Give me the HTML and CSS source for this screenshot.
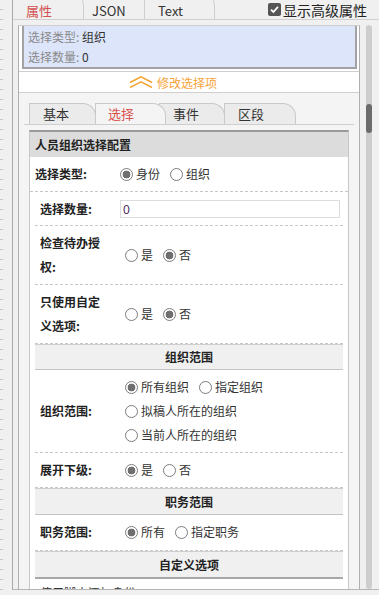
FILE: index.html
```html
<!DOCTYPE html>
<html lang="zh-CN">
<head>
<meta charset="utf-8">
<title>属性</title>
<link rel="stylesheet" href="styles.css">
</head>
<body>
<div class="app">
  <div class="ruler"></div>
  <div class="panel">
    <div class="topbar">
      <div class="tabs">
        <div class="tab t1 active">属性</div>
        <div class="tab t2">JSON</div>
        <div class="tab t3">Text</div>
      </div>
      <label class="adv"><span class="cbox"><svg width="11" height="11" viewBox="0 0 11 11"><path d="M2 5.6 L4.4 8 L9 2.8" fill="none" stroke="#fff" stroke-width="1.8"/></svg></span>显示高级属性</label>
    </div>
    <div class="viewport">
      <div class="content">
        <div class="summary-wrap">
          <div class="summary">
            <div><span class="k">选择类型:</span> 组织</div>
            <div><span class="k">选择数量:</span> 0</div>
          </div>
        </div>
        <div class="modify">
          <svg class="chev" width="24" height="12" viewBox="0 0 24 12"><path d="M1 6.5 L12 0.8 L23 6.5 M1 11.5 L12 5.8 L23 11.5" fill="none" stroke="#f6a534" stroke-width="1.6"/></svg>
          <span>修改选择项</span>
        </div>
        <div class="subarea">
          <div class="subtabs">
            <div class="stab s1">基本</div>
            <div class="stab s2 active">选择</div>
            <div class="stab s3">事件</div>
            <div class="stab s4">区段</div>
          </div>
          <div class="form">
            <div class="fhead">人员组织选择配置</div>
            <div class="row">
              <div class="lbl">选择类型:</div>
              <div class="val">
                <label class="opt"><input type="radio" name="type" checked>身份</label>
                <label class="opt"><input type="radio" name="type">组织</label>
              </div>
            </div>
            <div class="inner">
              <div class="row r33">
                <div class="lbl">选择数量:</div>
                <div class="val"><input class="num" type="text" value="0"></div>
              </div>
              <div class="row">
                <div class="lbl">检查待办授权:</div>
                <div class="val">
                  <label class="opt"><input type="radio" name="auth">是</label>
                  <label class="opt"><input type="radio" name="auth" checked>否</label>
                </div>
              </div>
              <div class="row">
                <div class="lbl">只使用自定义选项:</div>
                <div class="val">
                  <label class="opt"><input type="radio" name="custom">是</label>
                  <label class="opt"><input type="radio" name="custom" checked>否</label>
                </div>
              </div>
              <div class="sec">组织范围</div>
              <div class="row">
                <div class="lbl">组织范围:</div>
                <div class="val stack">
                  <div class="line">
                    <label class="opt"><input type="radio" name="org" checked>所有组织</label>
                    <label class="opt"><input type="radio" name="org">指定组织</label>
                  </div>
                  <div class="line"><label class="opt"><input type="radio" name="org">拟稿人所在的组织</label></div>
                  <div class="line"><label class="opt"><input type="radio" name="org">当前人所在的组织</label></div>
                </div>
              </div>
              <div class="row">
                <div class="lbl">展开下级:</div>
                <div class="val">
                  <label class="opt"><input type="radio" name="expand" checked>是</label>
                  <label class="opt"><input type="radio" name="expand">否</label>
                </div>
              </div>
              <div class="sec s25">职务范围</div>
              <div class="row r35">
                <div class="lbl">职务范围:</div>
                <div class="val">
                  <label class="opt"><input type="radio" name="duty" checked>所有</label>
                  <label class="opt"><input type="radio" name="duty">指定职务</label>
                </div>
              </div>
              <div class="sec s25 last">自定义选项</div>
              <div class="row">
                <div class="full">使用脚本添加身份</div>
              </div>
            </div>
          </div>
        </div>
      </div>
      <div class="scrollbar"><div class="thumb"></div></div>
    </div>
  </div>
</div>
</body>
</html>
```
FILE: styles.css
```css
* { box-sizing: border-box; }
html, body { margin: 0; padding: 0; }
body {
  width: 379px;
  height: 595px;
  overflow: hidden;
  background: #f0f0f0;
  font-family: "Noto Sans CJK SC", "Noto Sans", sans-serif;
  font-size: 12px;
  color: #333;
}
.app { display: flex; height: 595px; }
.ruler {
  width: 12px;
  flex: none;
  background-image: repeating-linear-gradient(to bottom, transparent 0 9px, #c8c8c8 9px 10px);
  background-size: 3px 100%;
  background-repeat: no-repeat;
}
.panel {
  flex: 1;
  min-width: 0;
  height: 590px;
  border-left: 1px solid #a9a9a9;
  border-bottom: 1px solid #b5b5b5;
  display: flex;
  flex-direction: column;
  overflow: hidden;
}
.topbar {
  height: 20px;
  flex: none;
  border-bottom: 1px solid #cfcfcf;
  display: flex;
  justify-content: space-between;
  align-items: flex-start;
}
.tabs { display: flex; align-items: flex-start; height: 19px; }
.tab {
  margin-top: -12px;
  height: 31px;
  padding: 12px 0 0 13px;
  line-height: 19px;
  font-size: 13px;
  background: #f0f0f0;
  border: 1px solid #cfcfcf;
  border-bottom: 0;
  border-top-right-radius: 18px;
  color: #333;
  z-index: 1;
}
.tab.t1 { width: 71px; border-left: 0; z-index: 3; }
.tab.t2 { width: 80px; margin-left: -8px; border-left: 0; padding-left: 16px; }
.tab.t3 { width: 71px; margin-left: -12px; z-index: 2; }
.tab.active { color: #d0504f; }
.adv {
  display: flex;
  align-items: center;
  height: 19px;
  padding-right: 12px;
  font-size: 14px;
  color: #222;
}
.cbox {
  width: 13px;
  height: 13px;
  margin-right: 2px;
  background: #555;
  border-radius: 2px;
  display: flex;
  align-items: center;
  justify-content: center;
}
.viewport { flex: 1; min-height: 0; display: flex; padding-top: 5px; overflow: hidden; }
.content {
  width: 342px;
  flex: none;
  margin-left: 5px;
  border: 1px solid #b0b0b0;
  border-top-color: #cfcfcf;
  border-bottom: 0;
  background: #fff;
  display: flex;
  flex-direction: column;
  overflow: hidden;
}
.summary-wrap {
  flex: none;
  padding: 0 2px 2px 3px;
  border-bottom: 1px solid #cfcfcf;
}
.summary {
  border: 2px solid #a3a3a3;
  border-top: 0;
  background: #dde5fa;
  padding: 1px 0 0 4px;
  line-height: 20px;
  color: #333;
}
.summary .k { color: #8a8a8a; }
.modify {
  height: 21px;
  flex: none;
  border-bottom: 1px solid #cfcfcf;
  display: flex;
  align-items: center;
  padding-left: 110px;
  color: #f5a33a;
}
.chev { margin-right: 4px; }
.subarea {
  flex: 1 0 auto;
  background: #f4f4f4;
  padding: 10px 5px 0;
}
.subtabs {
  display: flex;
  padding-left: 5px;
  border-bottom: 1px solid #cfcfcf;
  height: 22px;
}
.stab {
  height: 21px;
  border: 1px solid #c9c9c9;
  border-bottom: 0;
  border-top-right-radius: 13px;
  background: #ebebeb;
  font-size: 13px;
  line-height: 20px;
  padding-left: 13px;
  color: #333;
  z-index: 1;
}
.stab.s1 { width: 67px; }
.stab.s2 { width: 71px; margin-left: -1px; padding-left: 12px; z-index: 2; }
.stab.s3 { width: 66px; margin-left: -7px; }
.stab.s4 { width: 72px; margin-left: -1px; }
.stab.active { background: #f4f4f4; color: #d9534f; }
.form {
  margin: 5px 5px 0;
  background: #fff;
  border: 1px solid #c8c8c8;
  border-top: 2px solid #9a9a9a;
  border-bottom: 0;
}
.fhead {
  background: #dcdcdc;
  padding: 0 5px;
  line-height: 25px;
  font-weight: 700;
  color: #222;
}
.row {
  display: grid;
  grid-template-columns: 80px 1fr;
  align-items: center;
  border-bottom: 1px dashed #c8c8c8;
}
.row > div { padding: 5px; line-height: 24px; }
.row.r33 > div { padding: 5px 5px 4px; }
.row.r35 > div { padding: 5px 5px 6px; }
.lbl { font-weight: 700; color: #222; }
.val { display: flex; align-items: center; min-height: 34px; }
.row.r33 .val { min-height: 33px; }
.row.r35 .val { min-height: 35px; }
.val.stack { flex-direction: column; align-items: flex-start; }
.row > .full { grid-column: 1 / -1; color: #333; padding-top: 2px; }
.inner { margin: 0 5px; }
.sec {
  border-top: 1px solid #cfcfcf;
  border-bottom: 1px solid #c4c4c4;
  background: #f0f0f0;
  line-height: 24px;
  text-align: center;
  font-weight: 700;
  color: #222;
}
.sec.s25 { line-height: 25px; }
.sec.last { border-bottom: 2px solid #a8a8a8; }
.opt {
  display: flex;
  align-items: center;
  height: 24px;
  margin-right: 5px;
  color: #333;
}
.line { display: flex; height: 24px; }
input[type=radio] {
  -webkit-appearance: none;
  appearance: none;
  width: 13px;
  height: 13px;
  margin: 0 3px 0 5px;
  border: 1px solid #7c7c7c;
  border-radius: 50%;
  background: #fff;
  flex: none;
}
input[type=radio]:checked {
  background: radial-gradient(circle, #6f6f6f 0 3.6px, #fff 4.2px);
}
.num {
  width: 220px;
  height: 18px;
  margin: 0;
  border: 1px solid #dcdcdc;
  padding: 0 2px;
  font: 12px "Noto Sans", "Noto Sans CJK SC", sans-serif;
  color: #503060;
  outline: none;
}
.scrollbar {
  width: 6px;
  flex: none;
  margin-left: 6px;
  background: #cdcdcd;
  border-radius: 3px;
}
.thumb {
  margin-top: 79px;
  height: 29px;
  background: #6b6b6b;
  border-radius: 3px;
}
```
